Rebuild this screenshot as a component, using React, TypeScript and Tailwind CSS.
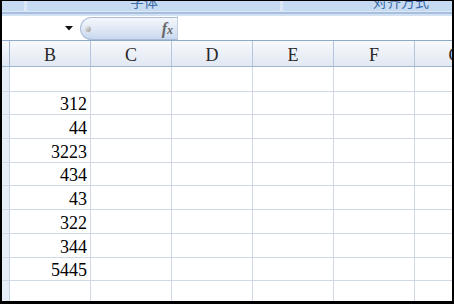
import React from 'react';

const cols = ['B', 'C', 'D', 'E', 'F', 'G'];

const rows: { h: string; v: string }[] = [
  { h: 'h-[25px]', v: '' },
  { h: 'h-[23px]', v: '312' },
  { h: 'h-[24px]', v: '44' },
  { h: 'h-[24px]', v: '3223' },
  { h: 'h-[23px]', v: '434' },
  { h: 'h-[24px]', v: '43' },
  { h: 'h-[24px]', v: '322' },
  { h: 'h-[24px]', v: '344' },
  { h: 'h-[23px]', v: '5445' },
  { h: 'h-[24px]', v: '' },
];

const serif = 'font-[family-name:Liberation_Serif,serif]';
const cjk = 'font-[family-name:Noto_Sans_CJK_SC,sans-serif]';

export default function App() {
  return (
    <div className="w-[454px] h-[304px] bg-black border-t-[1px] border-l-2 border-r-2 border-b-[3px] border-black overflow-hidden">
      <div className="w-[450px] h-[300px] flex flex-col bg-white overflow-hidden">
        {/* ribbon group labels, cut off at the top */}
        <div className="h-[10px] shrink-0 flex bg-[#dce8f6] gap-[3px] overflow-hidden">
          <div className="w-[22px] bg-[#c6daf1] rounded-br-[2px]" />
          <div className="w-[253px] bg-[#c6daf1] rounded-b-[2px] overflow-hidden">
            <div className={`pl-[103px] -mt-[7px] text-[14px] leading-[14px] text-[#3b6aa8] ${cjk}`}>
              字体
            </div>
          </div>
          <div className="flex-1 bg-[#c6daf1] rounded-bl-[2px] overflow-hidden">
            <div className={`pl-[90px] -mt-[7px] text-[14px] leading-[14px] text-[#3b6aa8] whitespace-nowrap ${cjk}`}>
              对齐方式
            </div>
          </div>
        </div>
        <div className="h-[1px] shrink-0 bg-[#dbe8f6]" />
        <div className="h-[2px] shrink-0 bg-[#a7bfdc]" />
        <div className="h-[2px] shrink-0 bg-[#d3e2f3]" />

        {/* formula bar */}
        <div className="h-[24px] shrink-0 flex items-center bg-white">
          <div className="w-[78px] h-full flex items-center justify-end pr-[7px]">
            <svg width="8" height="5" viewBox="0 0 8 5">
              <path d="M0 0 H8 L4 4.5 Z" fill="#111" />
            </svg>
          </div>
          <div className="w-[97px] h-[23px] mt-[1px] rounded-l-full border border-r-0 border-[#a9bdd8] bg-gradient-to-b from-[#f4f7fc] via-[#e1e9f5] to-[#c9d8ee] flex items-center justify-between pl-[4px] pr-[4px]">
            <div className="w-[6px] h-[6px] rounded-full bg-gradient-to-br from-[#f4f4f4] to-[#9a9a9a]" />
            <span className={`${serif} italic font-bold text-[16px] leading-none text-[#666]`}>
              f<span className="text-[12px]">x</span>
            </span>
          </div>
          <div className="flex-1 h-full border-l border-[#c3d0e2] bg-white" />
        </div>
        <div className="h-[1px] shrink-0 bg-[#8faac8]" />

        {/* column headers */}
        <div className="h-[26px] shrink-0 flex bg-gradient-to-b from-[#f7f9fc] to-[#e1e8f2] border-b border-[#9eb6ce]">
          <div className="w-[8px] shrink-0 border-r border-[#9eb6ce]" />
          {cols.map((c) => (
            <div
              key={c}
              className={`w-[81px] shrink-0 border-r border-[#b4c6dc] flex items-end justify-center ${serif} text-[18px] leading-[21px] text-[#2a2a2a]`}
            >
              {c}
            </div>
          ))}
        </div>

        {/* cells */}
        {rows.map((r, ri) => (
          <div key={ri} className={`${r.h} shrink-0 flex border-b border-[#d0d7e5]`}>
            <div className="w-[8px] shrink-0 bg-[#e8eef7] border-r border-[#c5d2e3]" />
            {cols.map((c, ci) => (
              <div
                key={c}
                className={`w-[81px] shrink-0 border-r border-[#d0d7e5] flex items-end justify-end pr-[3px] ${serif} text-[18px] leading-[20px] text-black`}
              >
                {ci === 0 ? r.v : ''}
              </div>
            ))}
          </div>
        ))}
      </div>
    </div>
  );
}
